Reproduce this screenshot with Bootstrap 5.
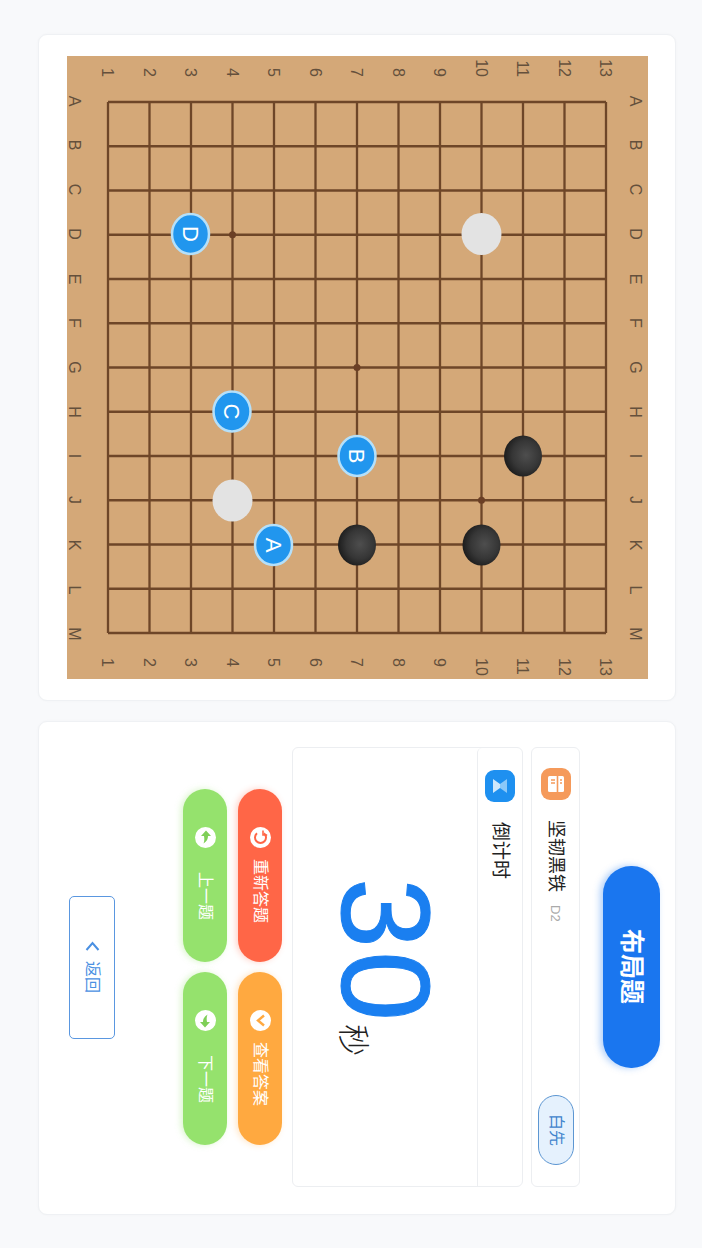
<!DOCTYPE html>
<html lang="zh">
<head>
<meta charset="utf-8">
<title>布局题</title>
<link href="https://cdn.jsdelivr.net/npm/bootstrap@5.3.0/dist/css/bootstrap.min.css" rel="stylesheet">
<style>
html,body{margin:0;height:100%;overflow:hidden;background:#f8f9fb}
body{font-family:"Liberation Sans","Noto Sans CJK SC",sans-serif}
.stage{writing-mode:vertical-rl;text-orientation:sideways;width:702px;height:1248px;padding:34px 26px 33px 38px;gap:20px;box-sizing:border-box;font-family:"Liberation Sans","Noto Sans CJK SC",sans-serif}
.sheet{background:#fff;border:1px solid #eff1f4;border-radius:9px;box-shadow:0 0 3px rgba(0,0,0,.03)}
.board-sheet{inline-size:667px}
.panel-sheet{inline-size:494px;padding-block-start:15px;padding-inline-end:2px}
.goban{display:block;writing-mode:horizontal-tb;overflow:visible}
.goban text{font-family:"Liberation Sans",sans-serif;font-size:16px;fill:#64503c}
.goban .mk{font-size:22px;fill:#fff}
.title-btn{inline-size:202px;block-size:57px;border:0;border-radius:28px;background:#1a76ef;color:#fff;font-size:25px;font-weight:700;padding:0;box-shadow:-3px 0 7px rgba(26,118,239,.35)}
.title-btn:hover{background:#1a76ef;color:#fff}
.info-box{inline-size:440px;block-size:49px;margin-block-start:23px;padding-inline:20px 21px;border:1px solid #eceef1;border-radius:6px;background:#fff}
.tile{display:block;flex:none}
.player{margin-inline-start:20px;font-size:18px;line-height:1;color:#222}
.rank{margin-inline-start:13px;font-size:13px;color:#aaa}
.side-tag{inline-size:70px;block-size:36px;margin-inline-start:auto;background:#e5f1fd;border:1px solid #5c96d2;border-radius:18px;color:#3f83cc;font-size:16px;font-weight:400;padding:0}
.timer-box{inline-size:440px;block-size:231px;margin-block-start:8px;border:1px solid #eceef1;border-radius:6px}
.timer-head{block-size:45px;flex:none;padding-block:0;padding-inline:22px;background:transparent;border-bottom:0;border-block-end:1px solid #eceef1}
.timer-head .player{font-size:19px}
.timer-body{padding:0}
.secs{font-size:126px;line-height:1;letter-spacing:3px;color:#1a7ff0;-webkit-text-stroke:1px #1a7ff0;font-family:"Liberation Sans",sans-serif}
.unit{font-size:32px;line-height:1;color:#222;font-family:"Noto Sans CJK SC",sans-serif;font-weight:300}
.act-row{gap:10px;margin-block-start:10px}
.act-row+.act-row{margin-block-start:11px}
.act-btn{inline-size:173px;block-size:44px;padding:0;padding-inline-start:38px;border:0;border-radius:22px;color:#fff;font-size:16px;line-height:1}
.act-btn:hover{color:#fff}
.act-btn svg{flex:none;display:block}
.act-btn span{margin-inline-start:11px}
.act-btn.wide span{margin-inline-start:24px}
.tone-red,.tone-red:hover{background:#ff6647;box-shadow:-2px 0 6px rgba(255,102,71,.3)}
.tone-amber,.tone-amber:hover{background:#ffa940;box-shadow:-2px 0 6px rgba(255,169,64,.3)}
.tone-green,.tone-green:hover{background:#95e26d;box-shadow:-2px 0 6px rgba(149,226,109,.35)}
.back-btn{inline-size:143px;block-size:46px;margin-block-start:68px;padding:0;background:#fff;border:1px solid #5a97e0;border-radius:5px;color:#4a90e2;font-size:16px;line-height:1;gap:10px}
.back-btn:hover{background:#fff;color:#4a90e2}
</style>
</head>
<body>
<main class="stage d-flex">
  <section class="card sheet board-sheet align-items-center justify-content-center">
    <svg class="goban" width="581" height="623" viewBox="67 56 581 623" role="img" aria-label="棋盘">
      <defs>
        <radialGradient id="blk" cx=".58" cy=".48" r=".6"><stop offset="0" stop-color="#4e4e4e"/><stop offset=".6" stop-color="#363636"/><stop offset="1" stop-color="#1a1a1a"/></radialGradient>
      </defs>
      <rect x="67" y="56" width="581" height="623" fill="#d4a878"/>
      <path fill="none" stroke="#6e4628" stroke-width="2.3" d="M108 102V633M149.5 102V633M191 102V633M232.5 102V633M274 102V633M315.5 102V633M357 102V633M398.5 102V633M440 102V633M481.5 102V633M523 102V633M564.5 102V633M606 102V633M108 102H606M108 146.25H606M108 190.5H606M108 234.75H606M108 279H606M108 323.25H606M108 367.5H606M108 411.75H606M108 456H606M108 500.25H606M108 544.5H606M108 588.75H606M108 633H606"/>
      <g fill="#6b3f25"><circle cx="232.5" cy="234.75" r="3.5"/><circle cx="357" cy="367.5" r="3.5"/><circle cx="481.5" cy="500.25" r="3.5"/></g>
      <g text-anchor="end">
        <text transform="translate(108,77) rotate(90)" dy=".35em">1</text><text transform="translate(149.5,77) rotate(90)" dy=".35em">2</text><text transform="translate(191,77) rotate(90)" dy=".35em">3</text><text transform="translate(232.5,77) rotate(90)" dy=".35em">4</text><text transform="translate(274,77) rotate(90)" dy=".35em">5</text><text transform="translate(315.5,77) rotate(90)" dy=".35em">6</text><text transform="translate(357,77) rotate(90)" dy=".35em">7</text><text transform="translate(398.5,77) rotate(90)" dy=".35em">8</text><text transform="translate(440,77) rotate(90)" dy=".35em">9</text><text transform="translate(481.5,77) rotate(90)" dy=".35em">10</text><text transform="translate(523,77) rotate(90)" dy=".35em">11</text><text transform="translate(564.5,77) rotate(90)" dy=".35em">12</text><text transform="translate(606,77) rotate(90)" dy=".35em">13</text>
      </g>
      <g text-anchor="start">
        <text transform="translate(108,658) rotate(90)" dy=".35em">1</text><text transform="translate(149.5,658) rotate(90)" dy=".35em">2</text><text transform="translate(191,658) rotate(90)" dy=".35em">3</text><text transform="translate(232.5,658) rotate(90)" dy=".35em">4</text><text transform="translate(274,658) rotate(90)" dy=".35em">5</text><text transform="translate(315.5,658) rotate(90)" dy=".35em">6</text><text transform="translate(357,658) rotate(90)" dy=".35em">7</text><text transform="translate(398.5,658) rotate(90)" dy=".35em">8</text><text transform="translate(440,658) rotate(90)" dy=".35em">9</text><text transform="translate(481.5,658) rotate(90)" dy=".35em">10</text><text transform="translate(523,658) rotate(90)" dy=".35em">11</text><text transform="translate(564.5,658) rotate(90)" dy=".35em">12</text><text transform="translate(606,658) rotate(90)" dy=".35em">13</text>
      </g>
      <g text-anchor="middle">
        <text transform="translate(75,101) rotate(90)" dy=".35em">A</text><text transform="translate(75,145) rotate(90)" dy=".35em">B</text><text transform="translate(75,189.5) rotate(90)" dy=".35em">C</text><text transform="translate(75,234) rotate(90)" dy=".35em">D</text><text transform="translate(75,279) rotate(90)" dy=".35em">E</text><text transform="translate(75,323) rotate(90)" dy=".35em">F</text><text transform="translate(75,367.5) rotate(90)" dy=".35em">G</text><text transform="translate(75,412) rotate(90)" dy=".35em">H</text><text transform="translate(75,456) rotate(90)" dy=".35em">I</text><text transform="translate(75,500) rotate(90)" dy=".35em">J</text><text transform="translate(75,545) rotate(90)" dy=".35em">K</text><text transform="translate(75,590) rotate(90)" dy=".35em">L</text><text transform="translate(75,634) rotate(90)" dy=".35em">M</text>
        <text transform="translate(636,101) rotate(90)" dy=".35em">A</text><text transform="translate(636,145) rotate(90)" dy=".35em">B</text><text transform="translate(636,189.5) rotate(90)" dy=".35em">C</text><text transform="translate(636,234) rotate(90)" dy=".35em">D</text><text transform="translate(636,279) rotate(90)" dy=".35em">E</text><text transform="translate(636,323) rotate(90)" dy=".35em">F</text><text transform="translate(636,367.5) rotate(90)" dy=".35em">G</text><text transform="translate(636,412) rotate(90)" dy=".35em">H</text><text transform="translate(636,456) rotate(90)" dy=".35em">I</text><text transform="translate(636,500) rotate(90)" dy=".35em">J</text><text transform="translate(636,545) rotate(90)" dy=".35em">K</text><text transform="translate(636,590) rotate(90)" dy=".35em">L</text><text transform="translate(636,634) rotate(90)" dy=".35em">M</text>
      </g>
      <g fill="#e3e3e3"><ellipse cx="481.5" cy="234" rx="20" ry="21"/><ellipse cx="232.5" cy="500.5" rx="20" ry="21"/></g>
      <g fill="url(#blk)"><ellipse cx="357" cy="545" rx="19" ry="20.5"/><ellipse cx="481.5" cy="545" rx="19" ry="20.5"/><ellipse cx="523" cy="456" rx="19" ry="20.5"/></g>
      <g fill="#2196ee" stroke="#b5e0fa" stroke-width="2.5">
        <ellipse cx="190.5" cy="234" rx="18.5" ry="20"/><ellipse cx="232" cy="411.5" rx="18.5" ry="20"/><ellipse cx="357" cy="456" rx="18.5" ry="20"/><ellipse cx="273.5" cy="545" rx="18.5" ry="20"/>
      </g>
      <g text-anchor="middle">
        <text class="mk" transform="translate(190.5,234) rotate(90)" dy=".35em">D</text><text class="mk" transform="translate(232,411.5) rotate(90)" dy=".35em">C</text><text class="mk" transform="translate(357,456) rotate(90)" dy=".35em">B</text><text class="mk" transform="translate(273.5,545) rotate(90)" dy=".35em">A</text>
      </g>
    </svg>
  </section>

  <section class="card sheet panel-sheet align-items-center">
    <a class="btn title-btn d-flex align-items-center justify-content-center" href="#">布局题</a>

    <div class="info-box d-flex align-items-center">
      <svg class="tile" width="30" height="32" viewBox="0 0 30 32"><rect width="30" height="32" rx="9" fill="#f59a5b"/><rect x="7" y="8" width="16" height="16" rx="1.5" fill="#fff"/><path d="M16.5 8v16M10 12h4M10 15h4M19 12h2M19 15h2" stroke="#f59a5b" stroke-width="1.6"/></svg>
      <span class="player">坚韧黑铁</span>
      <span class="rank">D2</span>
      <span class="badge side-tag d-flex align-items-center justify-content-center">白先</span>
    </div>

    <div class="card timer-box">
      <div class="card-header timer-head d-flex align-items-center">
        <svg class="tile" width="30" height="32" viewBox="0 0 30 32"><rect width="30" height="32" rx="9" fill="#1e90f0"/><path d="M8 9l7 5v4l-7 5z" fill="#cfe8fc"/><path d="M22 9l-7 5v4l7 5z" fill="#8cc8f8"/></svg>
        <span class="player">倒计时</span>
      </div>
      <div class="card-body timer-body d-flex align-items-center justify-content-center">
        <div><span class="secs">30</span><span class="unit">秒</span></div>
      </div>
    </div>

    <div class="act-row d-flex">
      <a class="btn act-btn tone-red d-flex align-items-center" href="#">
        <svg width="21" height="21" viewBox="0 0 21 21"><circle cx="10.5" cy="10.5" r="10.5" fill="#fff"/><path d="M7 6.3a5.5 5.5 0 1 0 7 0" fill="none" stroke="#ff6647" stroke-width="2"/><path d="M13 3.5v4.5h4.2" fill="none" stroke="#ff6647" stroke-width="1.6"/></svg>
        <span>重新答题</span>
      </a>
      <a class="btn act-btn tone-amber d-flex align-items-center" href="#">
        <svg width="21" height="21" viewBox="0 0 21 21"><circle cx="10.5" cy="10.5" r="10.5" fill="#fff"/><path d="M14 5.5l-6 5 6 5" fill="none" stroke="#ffa940" stroke-width="2.4"/></svg>
        <span>查看答案</span>
      </a>
    </div>
    <div class="act-row d-flex">
      <a class="btn act-btn wide tone-green d-flex align-items-center" href="#">
        <svg width="21" height="21" viewBox="0 0 21 21"><circle cx="10.5" cy="10.5" r="10.5" fill="#fff"/><path d="M11 3.5l5 5.5h-3c0 3-1 5-4.5 7.5 1-2.5 1-5 .5-7.5H6z" fill="#7fcf58"/></svg>
        <span>上一题</span>
      </a>
      <a class="btn act-btn wide tone-green d-flex align-items-center" href="#">
        <svg width="21" height="21" viewBox="0 0 21 21"><circle cx="10.5" cy="10.5" r="10.5" fill="#fff"/><path d="M10 17.5l-5-5.5h3c0-3 1-5 4.5-7.5-1 2.5-1 5-.5 7.5h3z" fill="#7fcf58"/></svg>
        <span>下一题</span>
      </a>
    </div>

    <a class="btn back-btn d-flex align-items-center justify-content-center" href="#">
      <svg width="15" height="10" viewBox="0 0 15 10"><path d="M1.5 9L7.5 2l6 7" fill="none" stroke="#4a90e2" stroke-width="2"/></svg>
      <span>返回</span>
    </a>
  </section>
</main>
<script src="https://cdn.jsdelivr.net/npm/bootstrap@5.3.0/dist/js/bootstrap.bundle.min.js"></script>
</body>
</html>
